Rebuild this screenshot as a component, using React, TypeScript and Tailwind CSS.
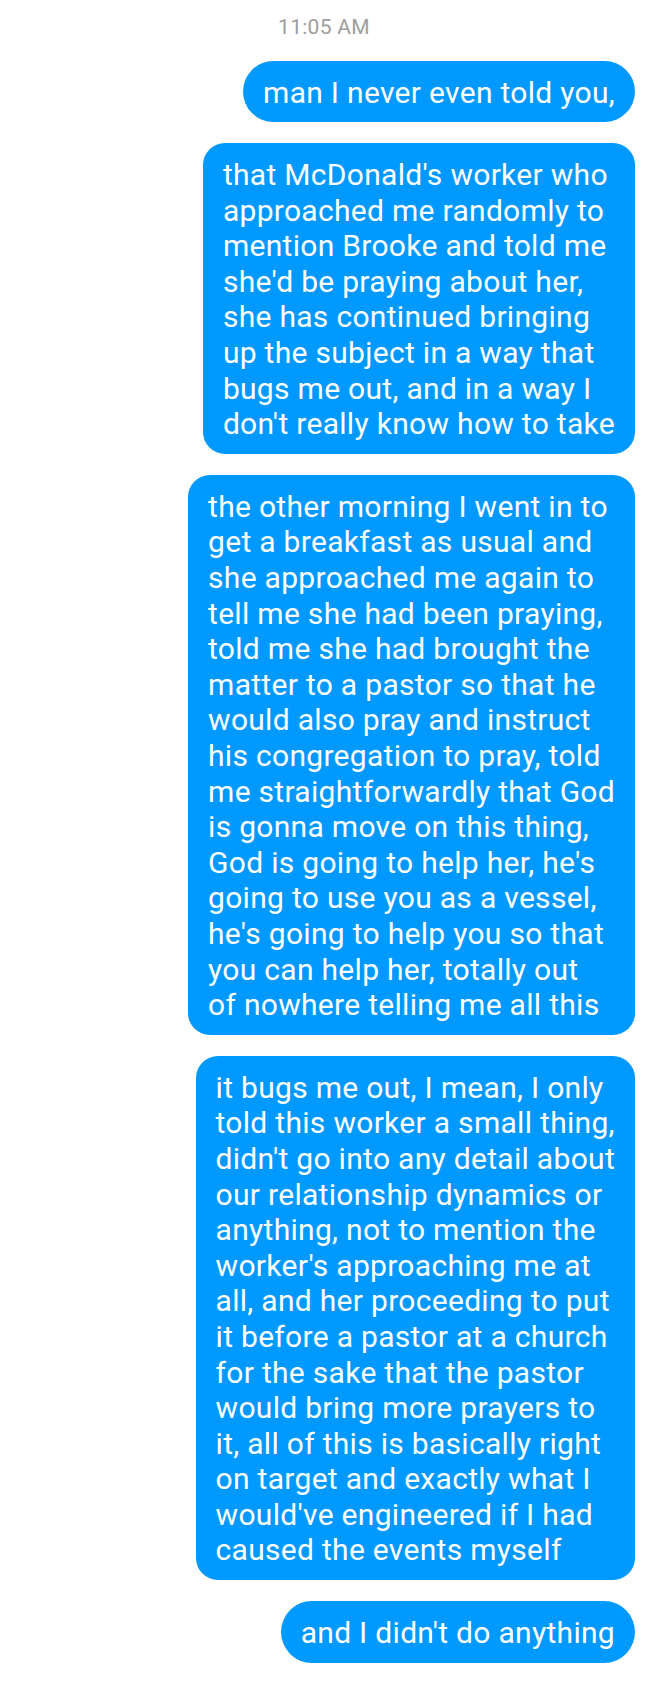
const messages: string[][] = [
  ["man I never even told you,"],
  [
    "that McDonald's worker who",
    "approached me randomly to",
    "mention Brooke and told me",
    "she'd be praying about her,",
    "she has continued bringing",
    "up the subject in a way that",
    "bugs me out, and in a way I",
    "don't really know how to take",
  ],
  [
    "the other morning I went in to",
    "get a breakfast as usual and",
    "she approached me again to",
    "tell me she had been praying,",
    "told me she had brought the",
    "matter to a pastor so that he",
    "would also pray and instruct",
    "his congregation to pray, told",
    "me straightforwardly that God",
    "is gonna move on this thing,",
    "God is going to help her, he's",
    "going to use you as a vessel,",
    "he's going to help you so that",
    "you can help her, totally out",
    "of nowhere telling me all this",
  ],
  [
    "it bugs me out, I mean, I only",
    "told this worker a small thing,",
    "didn't go into any detail about",
    "our relationship dynamics or",
    "anything, not to mention the",
    "worker's approaching me at",
    "all, and her proceeding to put",
    "it before a pastor at a church",
    "for the sake that the pastor",
    "would bring more prayers to",
    "it, all of this is basically right",
    "on target and exactly what I",
    "would've engineered if I had",
    "caused the events myself",
  ],
  ["and I didn't do anything"],
];

function Bubble({ lines }: { lines: string[] }) {
  const single = lines.length === 1;
  return (
    <div
      className={`bg-[#0099ff] text-white px-[20px] pt-[14px] pb-[12px] text-[30px] leading-[35.6px] tracking-[0.3px] ${
        single ? "rounded-full" : "rounded-[22px]"
      }`}
    >
      {lines.map((l, i) => (
        <div key={i} className="whitespace-nowrap">
          {l}
        </div>
      ))}
    </div>
  );
}

export default function App() {
  return (
    <div className="min-h-screen bg-white font-['Roboto',sans-serif] pt-[15px]">
      <div className="text-center text-[21px] leading-[24px] tracking-[0.3px] text-[#9e9e9e]">
        11:05 AM
      </div>
      <div className="flex flex-col items-end gap-[21px] pr-[13px] mt-[21.5px]">
        {messages.map((m, i) => (
          <Bubble key={i} lines={m} />
        ))}
      </div>
    </div>
  );
}
